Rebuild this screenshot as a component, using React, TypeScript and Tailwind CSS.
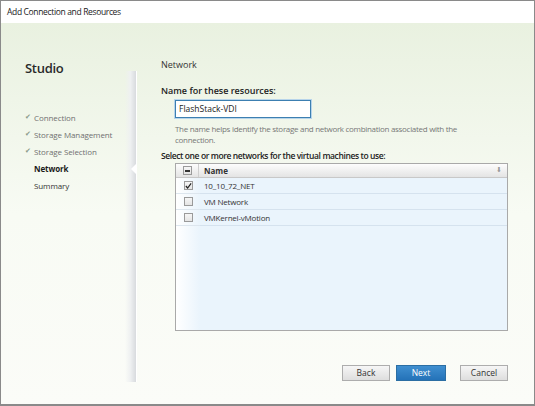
import React from "react";

const font = { fontFamily: '"Open Sans", "Noto Sans", sans-serif' };

const steps = [
  { label: "Connection", done: true },
  { label: "Storage Management", done: true },
  { label: "Storage Selection", done: true },
  { label: "Network", current: true },
  { label: "Summary" },
];

const networks = [
  { name: "10_10_72_NET", checked: true },
  { name: "VM Network", checked: false },
  { name: "VMKernel-vMotion", checked: false },
];

const Box: React.FC<{ checked?: boolean; minus?: boolean }> = ({ checked, minus }) => (
  <div className="w-[9px] h-[9px] border border-[#9a9a9a] bg-gradient-to-b from-[#f6f6f6] to-[#e4e4e4] flex items-center justify-center">
    {checked && (
      <svg width="8" height="8" viewBox="0 0 8 8">
        <path d="M1 4 L3 6.3 L7 1" stroke="#222" strokeWidth="1.4" fill="none" />
      </svg>
    )}
    {minus && <div className="w-[5px] h-[2px] bg-[#333]" />}
  </div>
);

const App: React.FC = () => {
  return (
    <div
      className="w-[535px] h-[406px] flex flex-col bg-[#8a8a8a] text-[#222] overflow-hidden"
      style={font}
    >
      {/* title bar */}
      <div className="h-[22px] mt-[1px] mx-[1px] bg-white flex items-center px-[6px] text-[8.5px] tracking-[-0.35px] text-[#1a1a1a]">
        Add Connection and Resources
      </div>

      <div className="h-[381px] mx-[1px] flex bg-gradient-to-b from-[#e9f1e0] via-[#f8fbf4] to-[#fbfcf8]">
        {/* left nav */}
        <div className="w-[137px] flex relative">
          <div className="flex-1 pl-[24px] pt-[33px]">
            <div className="text-[13px] tracking-[-0.3px] font-semibold text-[#2a2a2a] leading-[24px]">Studio</div>
            <div className="mt-[29px] flex flex-col">
              {steps.map((s) => (
                <div key={s.label} className="h-[17px] flex items-center text-[8px] tracking-[-0.1px]">
                  <span className="w-[9px] text-[#8a9a8a] text-[7px]">{s.done ? "✔" : ""}</span>
                  <span
                    className={
                      s.current
                        ? "font-bold text-[#1a1a1a]"
                        : s.done
                        ? "text-[#707070]"
                        : "text-[#333]"
                    }
                  >
                    {s.label}
                  </span>
                </div>
              ))}
            </div>
          </div>
          {/* separator shadow */}
          <div className="w-[12px] mt-[48px] mb-[22px] flex">
            <div className="flex-1 bg-gradient-to-r from-transparent via-[#eef0f1] to-[#d8dbde] relative">
              <div className="absolute right-0 top-[93px] w-0 h-0 border-y-[5px] border-y-transparent border-r-[5px] border-r-white" />
            </div>
            <div className="w-[1px] bg-white" />
          </div>
        </div>

        {/* content */}
        <div className="flex-1 pl-[24px] pr-[26px] flex flex-col">
          <div className="mt-[35px] text-[9px] leading-[14px] text-[#333]">Network</div>
          <div className="mt-[12px] text-[9px] leading-[14px] font-semibold text-[#222]">
            Name for these resources:
          </div>
          <div className="ml-[14px] mt-[2px] w-[136px] h-[18px] bg-white border border-[#3c7fb1] shadow-[0_0_0_1px_#b7d4ea] flex items-center px-[3px] text-[8.5px] text-[#222]">
            FlashStack-VDI
          </div>
          <div className="ml-[14px] mt-[5px] text-[8px] tracking-[-0.3px] leading-[11px] text-[#777] w-[300px]">
            The name helps identify the storage and network combination associated with the connection.
          </div>
          <div className="mt-[4px] text-[8.5px] tracking-[-0.4px] leading-[14px] font-semibold text-[#222]">
            Select one or more networks for the virtual machines to use:
          </div>
          <div className="ml-[14px] w-[333px] h-[168px] border border-[#a9a9a9] bg-white flex flex-col">
            {/* header */}
            <div className="h-[14px] flex bg-gradient-to-b from-[#fdfdfd] to-[#e4e4e4] border-b border-[#c8c8c8] text-[8px]">
              <div className="w-[23px] flex items-center justify-center border-r border-[#cfcfcf]">
                <Box minus />
              </div>
              <div className="flex-1 flex items-center justify-between pl-[5px] pr-[5px]">
                <span className="font-bold text-[#333]">Name</span>
                <span className="text-[#999] text-[7px]">⬇</span>
              </div>
            </div>
            {/* body */}
            <div className="flex-1 flex bg-[#eaf4fc]">
              <div className="w-[24px] bg-gradient-to-r from-white to-[#eaf4fc] flex flex-col">
                {networks.map((n) => (
                  <div key={n.name} className="h-[16px] flex items-center justify-center border-b border-[#dde6ee]">
                    <Box checked={n.checked} />
                  </div>
                ))}
              </div>
              <div className="flex-1 flex flex-col">
                {networks.map((n) => (
                  <div
                    key={n.name}
                    className="h-[16px] flex items-center pl-[4px] border-b border-[#d5e2ee] text-[8px] tracking-[-0.2px] text-[#333]"
                  >
                    {n.name}
                  </div>
                ))}
              </div>
            </div>
          </div>

          <div className="mt-[34px] flex justify-end gap-[6px] text-[8.5px]">
            <button className="w-[48px] h-[16px] border border-[#adadad] bg-gradient-to-b from-[#f6f6f6] to-[#dedede] text-[#333]">
              Back
            </button>
            <button className="w-[50px] h-[16px] border border-[#2b6ea3] bg-gradient-to-b from-[#3f8fd0] to-[#2472b8] text-white mr-[8px]">
              Next
            </button>
            <button className="w-[48px] h-[16px] border border-[#adadad] bg-gradient-to-b from-[#f6f6f6] to-[#dedede] text-[#333]">
              Cancel
            </button>
          </div>
        </div>
      </div>
    </div>
  );
};

export default App;
